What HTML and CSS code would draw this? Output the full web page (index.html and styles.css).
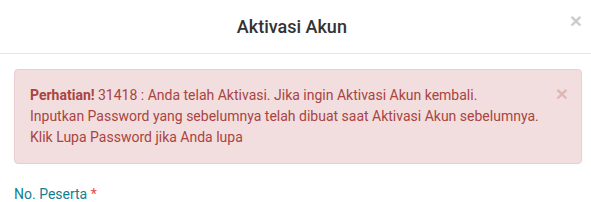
FILE: index.html
```html
<!DOCTYPE html>
<html lang="id">
<head>
    <meta charset="UTF-8">
    <meta name="viewport" content="width=device-width, initial-scale=1.0">
    <title>Aktivasi Akun</title>
    <link rel="stylesheet" href="styles.css">
</head>
<body>
    <div class="modal">
        <div class="modal-header">
            <button class="close" type="button">&times;</button>
            <h4 class="modal-title">Aktivasi Akun</h4>
        </div>
        <div class="modal-body">
            <div class="alert">
                <button class="close" type="button">&times;</button>
                <strong>Perhatian!</strong> 31418 : Anda telah Aktivasi. Jika ingin Aktivasi Akun kembali.<br>
                Inputkan Password yang sebelumnya telah dibuat saat Aktivasi Akun sebelumnya.<br>
                Klik Lupa Password jika Anda lupa
            </div>
            <label class="label">No. Peserta <span class="req">*</span></label>
        </div>
    </div>
</body>
</html>
```

FILE: styles.css
```css
* { margin: 0; padding: 0; box-sizing: border-box; }
body { font-family: Roboto, "Liberation Sans", sans-serif; font-size: 14px; line-height: 1.5; color: #333; background: #fff; overflow: hidden; }
.modal { width: 598px; margin-left: -1px; }
.modal-header { padding: 14px 15px 13px; border-bottom: 1px solid #e5e5e5; }
.modal-title { font-size: 18px; font-weight: 500; line-height: 26px; text-align: center; color: #333; }
.close { background: none; border: none; font-family: "Liberation Sans", sans-serif; font-size: 21px; font-weight: bold; line-height: 1; color: #000; opacity: .2; cursor: pointer; }
.modal-header .close { float: right; margin-top: -4px; }
.modal-body { padding: 15px; }
.alert { position: relative; background: #f2dede; border: 1px solid #ebccd1; color: #a94442; border-radius: 4px; padding: 15px; margin-bottom: 20px; }
.alert .close { position: absolute; top: 13px; right: 13px; color: #a94442; opacity: .25; }
.alert strong { font-weight: bold; }
.label { display: inline-block; color: #12808f; font-weight: 400; }
.req { color: #e74c3c; }
```
